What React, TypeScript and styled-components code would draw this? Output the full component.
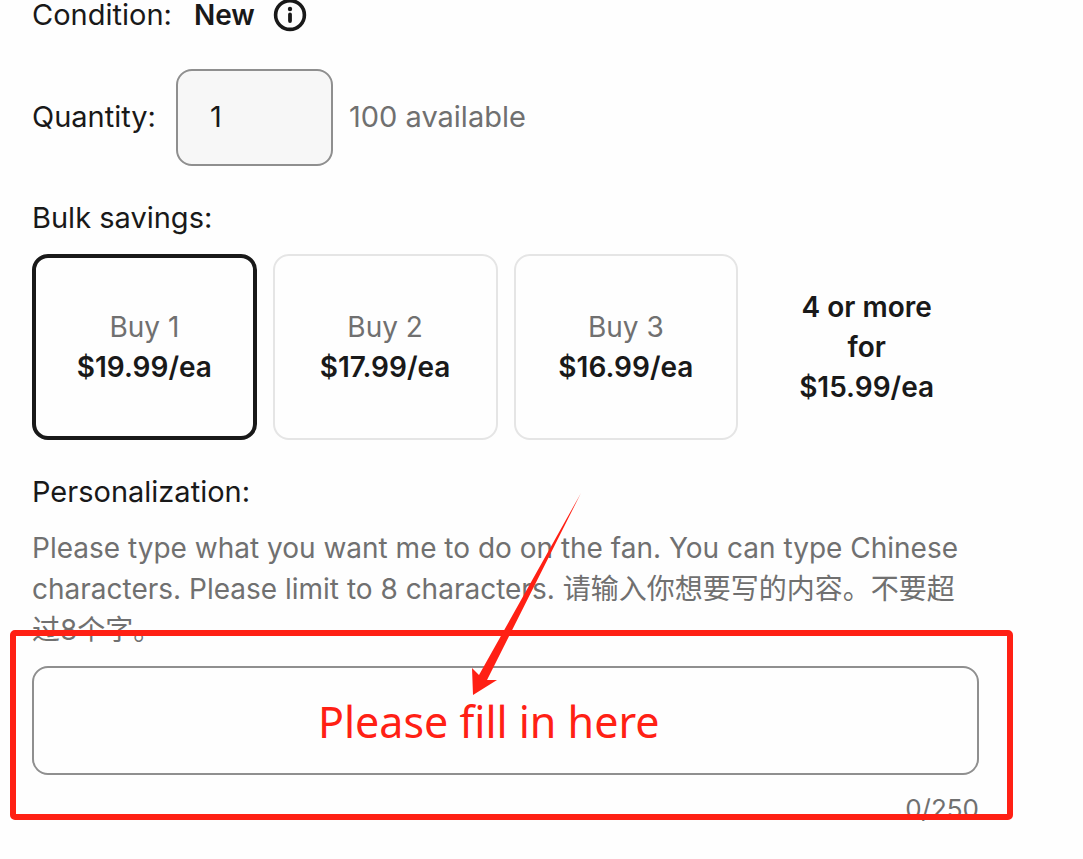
import React, { useState } from "react";
import styled, { createGlobalStyle } from "styled-components";

const GlobalStyle = createGlobalStyle`
  *, *::before, *::after { box-sizing: border-box; }
  body {
    margin: 0;
    background: #fefefe;
    color: #191919;
    font-family: Inter, "Noto Sans CJK SC", sans-serif;
    font-size: 29px;
    line-height: 40px;
  }
  input, button { font: inherit; color: inherit; }
`;

const Page = styled.main`
  padding: 0 104px 32px 32px;
`;

const ConditionRow = styled.div`
  display: flex;
  align-items: center;
  height: 29px;
  line-height: 28px;
`;

const ConditionValue = styled.strong`
  margin: 0 18px 0 22px;
  font-size: 28px;
  font-weight: 600;
`;

const InfoButton = styled.button`
  display: flex;
  padding: 0;
  border: 0;
  background: none;
`;

const QuantityRow = styled.div`
  display: flex;
  align-items: center;
  gap: 16px;
  margin-top: 40px;
`;

const QuantityLabel = styled.label`
  min-width: 128px;
  padding-bottom: 2px;
`;

const QuantityInput = styled.input`
  width: 157px;
  height: 97px;
  padding: 0 32px 2px;
  border: 2px solid #8f8f8f;
  border-radius: 16px;
  background: #f7f7f7;
`;

const Available = styled.span`
  padding-bottom: 2px;
  color: #707070;
`;

const SavingsGroup = styled.div`
  margin-top: 32px;
`;

const Tiers = styled.div`
  display: grid;
  grid-template-columns: repeat(4, 1fr);
  gap: 16px;
  margin-top: 16px;
  font-size: 28px;
`;

const TierButton = styled.button<{ $selected: boolean }>`
  display: flex;
  flex-direction: column;
  align-items: center;
  justify-content: center;
  height: 186px;
  padding: 0;
  border: ${(p) => (p.$selected ? "4px solid #191919" : "2px solid #e5e5e5")};
  border-radius: 16px;
  background: none;
`;

const TierName = styled.span`
  color: #707070;
`;

const Price = styled.span`
  font-weight: 600;
`;

const BulkOffer = styled.p`
  align-self: center;
  margin: 0;
  padding: 0 32px;
  text-align: center;
  font-weight: 600;
`;

const FieldLabel = styled.label`
  display: block;
  margin-top: 32px;
`;

const Hint = styled.p`
  margin: 16px 0 15px;
  font-size: 28px;
  line-height: 41px;
  color: #707070;
`;

const Field = styled.div`
  position: relative;
`;

const TextInput = styled.input`
  display: block;
  width: 100%;
  height: 109px;
  padding: 0 32px;
  border: 2px solid #8f8f8f;
  border-radius: 16px;
  background: none;
`;

const Counter = styled.div`
  margin-top: 14px;
  text-align: right;
  font-size: 26px;
  color: #707070;
`;

const HighlightBox = styled.div`
  position: absolute;
  inset: -36px -34px 9px -22px;
  border: 6px solid #ff2014;
  border-radius: 5px;
  pointer-events: none;
`;

const Callout = styled.div`
  position: absolute;
  top: 26px;
  left: 286px;
  font-family: "Noto Sans", sans-serif;
  font-size: 43px;
  line-height: 60px;
  white-space: nowrap;
  color: #ff2014;
  pointer-events: none;
`;

const Arrow = styled.svg`
  position: absolute;
  top: -174px;
  left: 438px;
  pointer-events: none;
`;

const tiers = [
  { label: "Buy 1", price: "$19.99/ea" },
  { label: "Buy 2", price: "$17.99/ea" },
  { label: "Buy 3", price: "$16.99/ea" },
];

export default function App() {
  const [selected, setSelected] = useState(0);
  const [quantity, setQuantity] = useState("1");
  const [text, setText] = useState("");

  return (
    <>
      <GlobalStyle />
      <Page>
        <ConditionRow>
          <span>Condition:</span>
          <ConditionValue>New</ConditionValue>
          <InfoButton type="button" aria-label="About this condition">
            <svg width="34" height="34" viewBox="0 0 34 34" aria-hidden="true">
              <circle cx="17" cy="17" r="14.4" fill="none" stroke="#191919" strokeWidth="3.6" />
              <circle cx="17" cy="11" r="2.2" fill="#191919" />
              <path d="M17 16.5v6.5" stroke="#191919" strokeWidth="3.8" strokeLinecap="round" />
            </svg>
          </InfoButton>
        </ConditionRow>

        <QuantityRow>
          <QuantityLabel htmlFor="quantity">Quantity:</QuantityLabel>
          <QuantityInput id="quantity" value={quantity} onChange={(e) => setQuantity(e.target.value)} />
          <Available>100 available</Available>
        </QuantityRow>

        <SavingsGroup role="group" aria-labelledby="savings">
          <div id="savings">Bulk savings:</div>
          <Tiers>
            {tiers.map((tier, i) => (
              <TierButton
                key={tier.label}
                type="button"
                aria-pressed={selected === i}
                $selected={selected === i}
                onClick={() => setSelected(i)}
              >
                <TierName>{tier.label}</TierName>
                <Price>{tier.price}</Price>
              </TierButton>
            ))}
            <BulkOffer>4 or more for $15.99/ea</BulkOffer>
          </Tiers>
        </SavingsGroup>

        <FieldLabel htmlFor="personalization">Personalization:</FieldLabel>
        <Hint id="hint">
          Please type what you want me to do on the fan. You can type Chinese characters. Please limit to 8 characters.
          请输入你想要写的内容。不要超过8个字。
        </Hint>
        <Field>
          <TextInput
            id="personalization"
            aria-describedby="hint"
            maxLength={250}
            value={text}
            onChange={(e) => setText(e.target.value)}
          />
          <Counter>{text.length}/250</Counter>
          <HighlightBox />
          <Callout>Please fill in here</Callout>
          <Arrow width="112" height="204" viewBox="0 0 112 204" aria-hidden="true">
            <path d="M111 1 L9 183 L2 176 L3 203 L27 188 L17 188 Z" fill="#ff2014" />
          </Arrow>
        </Field>
      </Page>
    </>
  );
}
